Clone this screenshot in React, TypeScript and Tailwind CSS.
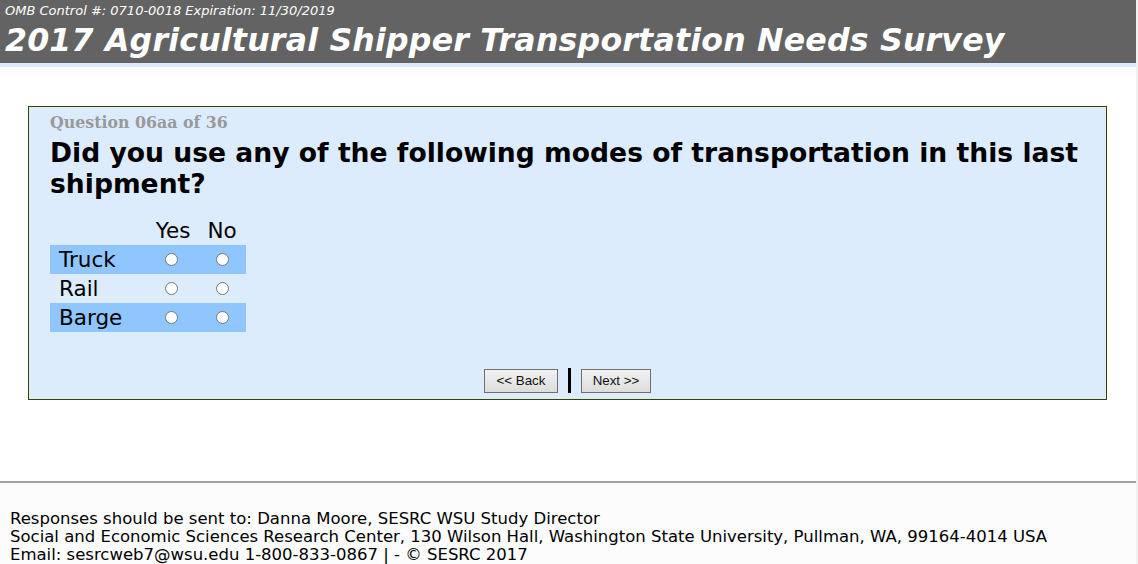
const verdana = "font-['DejaVu_Sans',Verdana,sans-serif]";

const modes = [
  { name: "Truck", shaded: true },
  { name: "Rail", shaded: false },
  { name: "Barge", shaded: true },
];

function Radio() {
  return (
    <span className="inline-block h-[13px] w-[13px] rounded-full border border-[#767676] bg-white" />
  );
}

export default function App() {
  return (
    <div className="flex h-[564px] w-[1138px] bg-white">
      <div className="flex w-[1136px] flex-col">
        <header className={`${verdana} h-[63px] bg-[#636363] px-[5px] pt-[3px] text-white`}>
          <div className="text-[13px] italic leading-[15px]">
            OMB Control #: 0710-0018 Expiration: 11/30/2019
          </div>
          <h1 className="mt-[3px] text-[31.6px] font-bold italic leading-[38px] tracking-[0.2px]">
            2017 Agricultural Shipper Transportation Needs Survey
          </h1>
        </header>
        <div className="h-[4px] bg-[#dbeafc]" />

        <main className="pl-[28px] pr-[29px] pt-[39px]">
          <section className="h-[294px] border border-[#334400] bg-[#ddecfd] px-[21px] pt-[6px]">
            <div className="font-['DejaVu_Serif',serif] text-[15.8px] font-bold leading-[20px] text-[#999999]">
              Question 06aa of 36
            </div>
            <h2 className={`${verdana} mt-[4px] text-[26.6px] font-bold leading-[31px] text-black`}>
              Did you use any of the following modes of transportation in this last shipment?
            </h2>

            <table className={`${verdana} mt-[18px] border-collapse text-[21.5px] text-black`}>
              <thead>
                <tr className="h-[28px]">
                  <th className="w-[98px]" />
                  <th className="w-[50px] text-center font-normal leading-[24px]">Yes</th>
                  <th className="w-[48px] text-center font-normal leading-[24px]">No</th>
                </tr>
              </thead>
              <tbody>
                {modes.map((m) => (
                  <tr key={m.name} className={`h-[29px] ${m.shaded ? "bg-[#8fc6fd]" : ""}`}>
                    <td className="pl-[9px] leading-[24px]">{m.name}</td>
                    <td className="text-center align-middle">
                      <span className="flex justify-center pr-[3px]">
                        <Radio />
                      </span>
                    </td>
                    <td className="text-center align-middle">
                      <span className="flex justify-center">
                        <Radio />
                      </span>
                    </td>
                  </tr>
                ))}
              </tbody>
            </table>

            <div className="mt-[36px] flex items-center justify-center gap-[10px] font-['Liberation_Sans',Arial,sans-serif] text-[13.33px]">
              <button className="h-[24px] w-[74px] border border-[#707070] bg-gradient-to-b from-[#f2f2f2] to-[#dcdcdc] text-[#111]">
                &lt;&lt; Back
              </button>
              <span className="h-[25px] w-[3px] bg-black" />
              <button className="h-[24px] w-[70px] border border-[#707070] bg-gradient-to-b from-[#f2f2f2] to-[#dcdcdc] text-[#111]">
                Next &gt;&gt;
              </button>
            </div>
          </section>
        </main>

        <div className="mt-[81px] h-[2px] bg-[#a0a0a0]" />

        <footer className={`${verdana} flex-1 bg-[#fcfcfc] px-[10px] pt-[27px] text-[16.5px] leading-[18px] text-black`}>
          <div>Responses should be sent to: Danna Moore, SESRC WSU Study Director</div>
          <div>
            Social and Economic Sciences Research Center, 130 Wilson Hall, Washington State University, Pullman, WA, 99164-4014 USA
          </div>
          <div>Email: sesrcweb7@wsu.edu 1-800-833-0867 | - © SESRC 2017</div>
        </footer>
      </div>
      <div className="w-[2px] bg-[#f0f0f0]" />
    </div>
  );
}
